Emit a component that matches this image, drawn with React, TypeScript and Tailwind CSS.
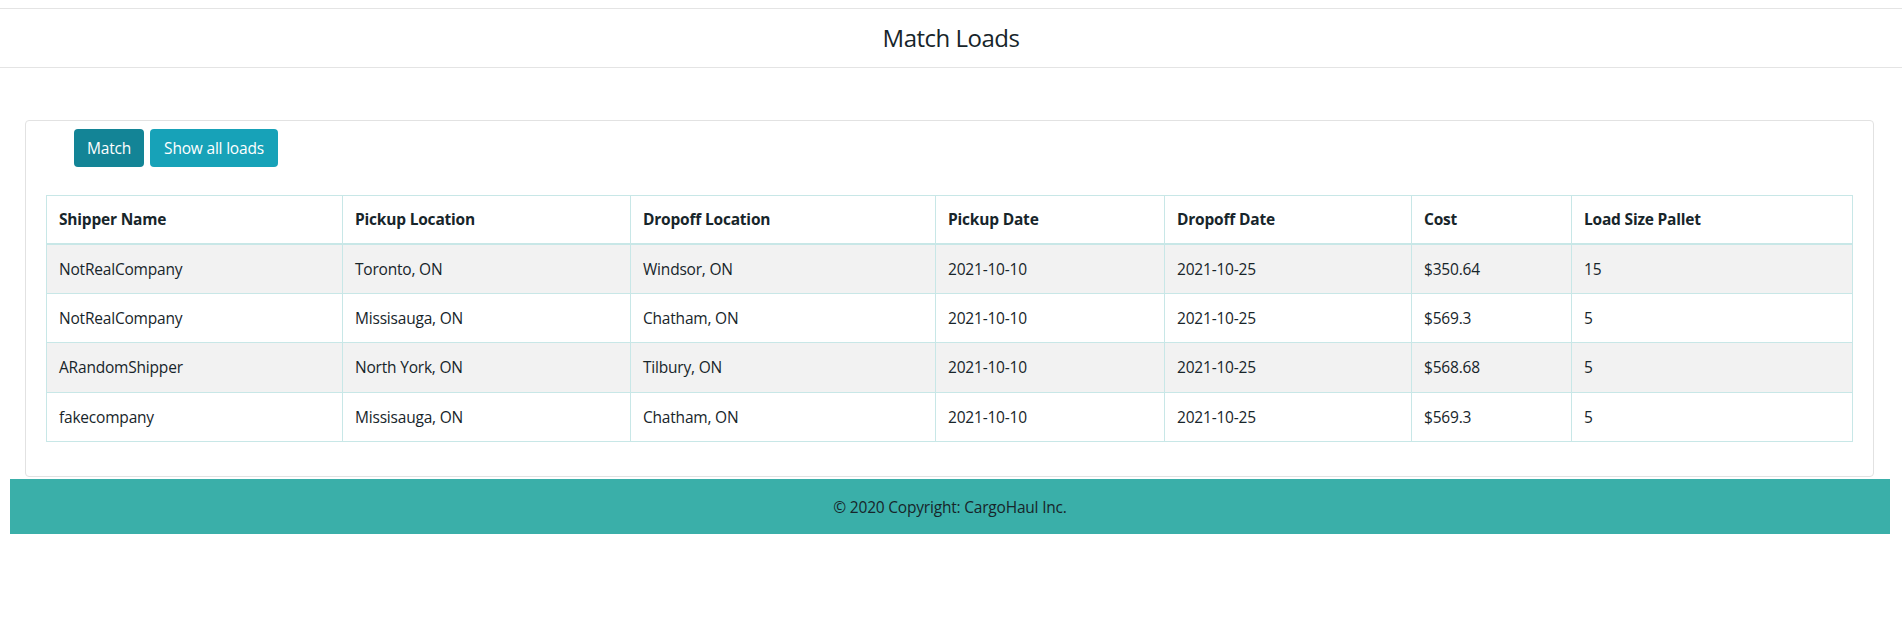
import React from "react";

const rows = [
  ["NotRealCompany", "Toronto, ON", "Windsor, ON", "2021-10-10", "2021-10-25", "$350.64", "15"],
  ["NotRealCompany", "Missisauga, ON", "Chatham, ON", "2021-10-10", "2021-10-25", "$569.3", "5"],
  ["ARandomShipper", "North York, ON", "Tilbury, ON", "2021-10-10", "2021-10-25", "$568.68", "5"],
  ["fakecompany", "Missisauga, ON", "Chatham, ON", "2021-10-10", "2021-10-25", "$569.3", "5"],
];

const headers = [
  "Shipper Name",
  "Pickup Location",
  "Dropoff Location",
  "Pickup Date",
  "Dropoff Date",
  "Cost",
  "Load Size Pallet",
];

export default function App() {
  return (
    <div className="min-h-screen bg-white text-[#17252A] font-['Open_Sans',sans-serif] text-[16px] leading-6">
      <div className="h-[8px]" />
      <header className="h-[60px] border-y border-[#e4e4e4] flex items-center justify-center">
        <h1 className="text-[24px] leading-[30px] font-normal text-[#17252A] tracking-[-0.5px]">Match Loads</h1>
      </header>
      <div className="h-[52px]" />
      <div className="ml-[25px] mr-[28px] border border-[#e2e2e2] rounded-[4px] pt-[8px] px-[20px] pb-[34px]">
        <div className="flex gap-[6px] pl-[28px]">
          <button className="h-[38px] w-[70px] rounded-[4px] bg-[#138496] text-white text-[15.5px] tracking-[-0.2px]">
            Match
          </button>
          <button className="h-[38px] w-[128px] rounded-[4px] bg-[#17a2b8] text-white text-[15.5px] tracking-[-0.2px]">
            Show all loads
          </button>
        </div>
        <table className="mt-[28px] w-full table-fixed border-collapse border border-[#c8e7e7] text-[15.5px] tracking-[-0.2px]">
          <colgroup>
            <col className="w-[296px]" />
            <col className="w-[288px]" />
            <col className="w-[305px]" />
            <col className="w-[229px]" />
            <col className="w-[247px]" />
            <col className="w-[160px]" />
            <col />
          </colgroup>
          <thead>
            <tr className="border-b-2 border-[#c8e7e7]">
              {headers.map((h) => (
                <th
                  key={h}
                  className="h-[48px] px-[12px] text-left font-bold border border-b-2 border-[#c8e7e7] align-middle"
                >
                  {h}
                </th>
              ))}
            </tr>
          </thead>
          <tbody>
            {rows.map((r, i) => (
              <tr key={i} className={i % 2 === 0 ? "bg-[#f2f2f2]" : "bg-white"}>
                {r.map((c, j) => (
                  <td key={j} className="h-[49.5px] px-[12px] border border-[#c8e7e7] align-middle">
                    {c}
                  </td>
                ))}
              </tr>
            ))}
          </tbody>
        </table>
      </div>
      <footer className="ml-[10px] mr-[12px] mt-[2px] h-[55px] bg-[#3AAFA9] flex items-center justify-center text-[#17252A] text-[15.5px] tracking-[-0.2px]">
        © 2020 Copyright: CargoHaul Inc.
      </footer>
    </div>
  );
}
